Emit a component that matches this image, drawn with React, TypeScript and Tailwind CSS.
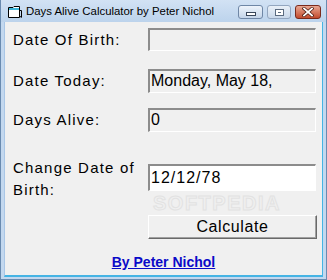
import React from "react";

const labelCls =
  "font-['Liberation_Sans',Arial,sans-serif] text-[15px] tracking-[1.2px] text-black leading-[22px]";
const boxFont = "font-['Liberation_Sans',Arial,sans-serif] text-[16px] text-black";
const sunken =
  "border-t-2 border-l-2 border-b border-r border-t-[#8c8c8c] border-l-[#8c8c8c] border-b-[#ffffff] border-r-[#ffffff]";

function WinIcon() {
  return (
    <svg width="16" height="14" viewBox="0 0 16 14">
      <path d="M1.5 2.5 H6 L7 1.5 H12.5 V12.5 H1.5 Z" fill="#ffffff" stroke="#000" strokeWidth="1" />
      <rect x="2" y="3" width="10" height="2" fill="#3fb6d8" />
      <path d="M12.5 5.5 L14.5 5.5 L14.5 12.5" fill="none" stroke="#000" strokeWidth="1" />
      <path d="M13 11 L15 11 L14 13 Z" fill="#000" />
    </svg>
  );
}

export default function App() {
  return (
    <div className="w-[327px] h-[280px] flex flex-col bg-[#c3d8ef] border-l border-r border-b border-[#6a8bb0] overflow-hidden">
      {/* title bar */}
      <div className="h-[22px] shrink-0 flex items-start bg-gradient-to-b from-[#d2e2f4] to-[#bcd3ec] overflow-hidden">
        <div className="ml-[6px] mt-[5px] shrink-0">
          <WinIcon />
        </div>
        <div className="ml-[3px] mt-[3px] whitespace-nowrap font-['Liberation_Sans',Arial,sans-serif] text-[11.4px] text-black leading-[16px]">
          Days Alive Calculator by Peter Nichol
        </div>
        <div className="ml-auto mr-[5px] mt-[5px] flex gap-[4px] shrink-0">
          <div className="w-[25px] h-[14px] rounded-[3px] border border-[#6f87a6] bg-gradient-to-b from-[#eef4fb] to-[#c4d5e9] flex items-center justify-center">
            <div className="w-[10px] h-[4px] bg-white border border-[#39475a] mt-[3px]" />
          </div>
          <div className="w-[24px] h-[14px] rounded-[3px] border border-[#93a6bf] bg-gradient-to-b from-[#e9f0f8] to-[#c9d8ea] flex items-center justify-center">
            <div className="w-[9px] h-[7px] border border-[#5b6b80] bg-white flex items-center justify-center">
              <div className="w-[3px] h-[1px] bg-[#5b6b80]" />
            </div>
          </div>
          <div className="w-[26px] h-[14px] rounded-[3px] border border-[#7a2a1c] bg-gradient-to-b from-[#e8a793] to-[#c24a2c] flex items-center justify-center">
            <svg width="12" height="10" viewBox="0 0 12 10">
              <path d="M2 1.5 L10 8.5 M10 1.5 L2 8.5" stroke="#4a1a10" strokeWidth="3.2" strokeLinecap="square" />
              <path d="M2 1.5 L10 8.5 M10 1.5 L2 8.5" stroke="#ffffff" strokeWidth="1.8" strokeLinecap="square" />
            </svg>
          </div>
        </div>
      </div>

      {/* client area */}
      <div className="flex-1 ml-[3px] mr-[3px] mb-[2px] bg-[#f0f0f0] border-b-2 border-r border-[#45b4e4] border-l border-l-[#a9c6e6] relative flex flex-col">
        {/* watermark */}
        <div className="absolute left-[148px] top-[171px] font-['Liberation_Sans',Arial,sans-serif] font-bold text-[20px] leading-none tracking-[1.5px] text-transparent [-webkit-text-stroke:1px_#e2e2e2] pointer-events-none">
          SOFTPEDIA
        </div>

        {/* row 1 */}
        <div className="flex items-center mt-[6px]">
          <div className={`${labelCls} ml-[8px] w-[135px]`}>Date Of Birth:</div>
          <div className={`w-[168px] h-[23px] bg-[#f0f0f0] ${sunken}`} />
        </div>
        {/* row 2 */}
        <div className="flex items-center mt-[18px]">
          <div className={`${labelCls} ml-[8px] w-[135px]`}>Date Today:</div>
          <div className={`w-[168px] h-[24px] bg-[#f0f0f0] ${sunken} ${boxFont} leading-[20px] pl-[1px] whitespace-nowrap overflow-hidden`}>
            Monday, May 18,
          </div>
        </div>
        {/* row 3 */}
        <div className="flex items-center mt-[15px]">
          <div className={`${labelCls} ml-[8px] w-[135px]`}>Days Alive:</div>
          <div className={`w-[168px] h-[24px] bg-[#f0f0f0] ${sunken} ${boxFont} leading-[20px] pl-[1px]`}>
            0
          </div>
        </div>
        {/* row 4 */}
        <div className="flex items-start mt-[25px]">
          <div className={`${labelCls} ml-[8px] w-[135px]`}>
            Change Date of
            <br />
            Birth:
          </div>
          <div className={`mt-[7px] w-[168px] h-[27px] bg-white ${sunken} ${boxFont} tracking-[1px] leading-[23px] pl-[1px]`}>
            12/12/78
          </div>
        </div>
        {/* button */}
        <div className="flex mt-[14px] relative">
          <div className="ml-[143px] w-[169px] h-[24px] bg-[#f0f0f0]/80 border border-t-white border-l-white border-b-[#696969] border-r-[#696969] shadow-[inset_-1px_-1px_0_#a0a0a0] flex items-center justify-center font-['Liberation_Sans',Arial,sans-serif] text-[16px] leading-[20px] tracking-[0.6px] text-black">
            Calculate
          </div>
        </div>
        {/* link */}
        <div className="flex justify-center mt-[15px]">
          <a className="font-['Liberation_Sans',Arial,sans-serif] font-bold text-[14px] leading-[16px] text-[#0a0ac8] underline">
            By Peter Nichol
          </a>
        </div>
      </div>
    </div>
  );
}
